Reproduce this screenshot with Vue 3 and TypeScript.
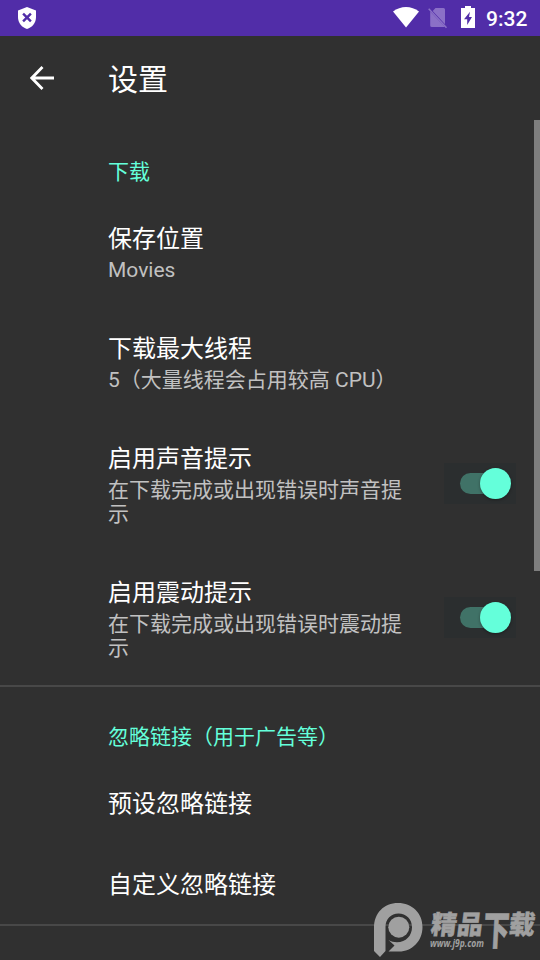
<script setup lang="ts">
interface Setting {
  title: string
  summary?: string
  enabled?: boolean
}

interface Group {
  name: string
  settings: Setting[]
}

const groups: Group[] = [
  {
    name: '下载',
    settings: [
      { title: '保存位置', summary: 'Movies' },
      { title: '下载最大线程', summary: '5（大量线程会占用较高 CPU）' },
      { title: '启用声音提示', summary: '在下载完成或出现错误时声音提示', enabled: true },
      { title: '启用震动提示', summary: '在下载完成或出现错误时震动提示', enabled: true },
    ],
  },
  {
    name: '忽略链接（用于广告等）',
    settings: [{ title: '预设忽略链接' }, { title: '自定义忽略链接' }],
  },
]
</script>

<template>
  <div class="screen">
    <div class="status">
      <svg class="shield" width="20" height="24" viewBox="0 0 20 24">
        <path d="M10 1 L19 4.5 V11 C19 17 15 21.5 10 23 C5 21.5 1 17 1 11 V4.5Z" fill="#fff" />
        <path d="M6.1 7.6 L13.9 15.4 M13.9 7.6 L6.1 15.4" stroke="#512da8" stroke-width="2.4" />
      </svg>
      <div class="indicators">
        <svg class="wifi" width="26" height="22" viewBox="0 0 26 22">
          <path d="M0 5.5 C7.5 -.5 18.5 -.5 26 5.5 L13 21.5Z" fill="#fff" />
        </svg>
        <svg class="sim" width="20" height="22" viewBox="0 0 20 22">
          <path d="M7.5 1 H15.5 Q17 1 17 2.5 V17.2 L4.7 4.1Z M2.2 4.5 L17 20 H4 Q2.2 20 2.2 18.5Z" fill="#8b70c7" />
          <path d="M.7 1.8 L18.5 20.8" stroke="#8b70c7" stroke-width="1.5" />
        </svg>
        <svg class="battery" width="14" height="22" viewBox="0 0 14 22">
          <path d="M4 0 H10 V2 H14 V22 H0 V2 H4Z" fill="#fff" />
          <path d="M9 5.8 L3 13.2 H6.2 V19 L11 11 H8Z" fill="#512da8" />
        </svg>
        <span class="clock">9:32</span>
      </div>
    </div>

    <header class="toolbar">
      <svg class="back" width="24" height="24" viewBox="0 0 24 24">
        <path d="M24 12 H2 M12.5 1 L1.8 12 L12.5 23" fill="none" stroke="#fff" stroke-width="2.8" />
      </svg>
      <h1>设置</h1>
    </header>

    <main class="content">
      <section v-for="group in groups" :key="group.name" class="group">
        <h2>{{ group.name }}</h2>
        <div v-for="item in group.settings" :key="item.title" class="item">
          <div class="label">
            <div class="title">{{ item.title }}</div>
            <div v-if="item.summary" class="summary">{{ item.summary }}</div>
          </div>
          <div v-if="item.enabled" class="switch">
            <span class="track"></span>
            <span class="thumb"></span>
          </div>
        </div>
      </section>
    </main>

    <div class="scrollbar"></div>

    <div class="watermark">
      <svg width="50" height="56" viewBox="0 0 50 56">
        <path
          d="M1 26 C1 11 11 1 25 1 C39 1 49.5 11 49.5 25 C49.5 39 39 49.5 26 49.5 H15.5 L21.5 43.5 L15.5 38 C18 39.5 21 40.2 24 40.2 C33 40.2 39 33.5 39 25.2 C39 17 33 11.5 25.5 11.5 C18 11.5 12.5 17 12.5 25 V49 L7 55 L1 49Z"
        />
        <circle cx="25.8" cy="25.2" r="10.5" />
      </svg>
      <div class="brand">
        <div class="name"><span>精</span><span>品</span><span class="tall">下</span><span>载</span></div>
        <div class="site">www.j9p.com</div>
      </div>
    </div>
  </div>
</template>

<style>
body {
  margin: 0;
  background: #303030;
}
</style>

<style scoped>
.screen {
  position: relative;
  width: 540px;
  height: 960px;
  overflow: hidden;
  background: #303030;
  color: #fff;
  font-family: Roboto, 'Noto Sans CJK SC', sans-serif;
}
.status {
  display: flex;
  justify-content: space-between;
  box-sizing: border-box;
  height: 36px;
  padding: 6px 12px 0 17px;
  background: #512da8;
}
.indicators {
  display: flex;
  align-items: flex-start;
}
.wifi {
  margin-right: 9px;
}
.sim {
  margin: 1px 13px 0 0;
}
.battery {
  margin-right: 11px;
}
.clock {
  width: 42px;
  padding-top: 1px;
  font-size: 21px;
  font-weight: 500;
  line-height: 25px;
  white-space: nowrap;
}
.toolbar {
  display: flex;
  align-items: center;
  height: 84px;
  padding-left: 30px;
}
h1 {
  margin: 3px 0 0 54px;
  font-size: 30px;
  font-weight: 400;
  line-height: 40px;
}
.group {
  padding-top: 36px;
}
.group + .group {
  margin-top: 2px;
  padding-top: 34px;
  border-top: 2px solid #484848;
}
.group:last-child {
  padding-bottom: 2px;
  border-bottom: 2px solid #484848;
}
h2 {
  margin: 0 0 7px 108px;
  color: #64ffda;
  font-size: 21px;
  font-weight: 400;
  line-height: 32px;
}
.item {
  display: flex;
  align-items: center;
  justify-content: space-between;
  padding: 0 24px 0 108px;
}
.label {
  width: 300px;
  padding: 28px 0 21px;
}
.title {
  font-size: 24px;
  line-height: 32px;
}
.summary {
  padding: 3px 0 2px;
  color: #c1c1c1;
  font-size: 21px;
  line-height: 24px;
}
.switch {
  display: flex;
  align-items: center;
  box-sizing: border-box;
  width: 72px;
  height: 41px;
  margin-top: 2px;
  padding-left: 16px;
  background: #2b2e2f;
}
.track {
  width: 46px;
  height: 21px;
  border-radius: 11px;
  background: #407267;
}
.thumb {
  width: 31px;
  height: 31px;
  margin-left: -26px;
  flex-shrink: 0;
  border-radius: 50%;
  background: #64ffda;
  box-shadow: 0 1px 3px rgba(0, 0, 0, 0.35);
}
.scrollbar {
  position: absolute;
  top: 120px;
  right: 0;
  width: 6px;
  height: 451px;
  background: #7e7e7e;
}
.watermark {
  position: absolute;
  left: 373px;
  top: 902px;
  display: flex;
  color: #a0a0a0;
}
.watermark svg {
  fill: #a0a0a0;
}
.brand {
  margin: 10px 0 0 8px;
}
.name {
  display: flex;
  height: 26px;
  font-size: 26px;
  font-weight: 900;
  line-height: 26px;
  transform: skewX(-7deg);
  -webkit-text-stroke: 0.4px #a0a0a0;
}
.tall {
  transform: skewX(4deg) scaleY(1.55);
  transform-origin: 50% 10%;
}
.site {
  width: max-content;
  font-family: 'Open Sans', sans-serif;
  font-size: 10.5px;
  font-style: italic;
  font-weight: 700;
  line-height: 11px;
  transform: translateX(-1px) scaleX(0.81);
  transform-origin: 0 50%;
}
</style>
